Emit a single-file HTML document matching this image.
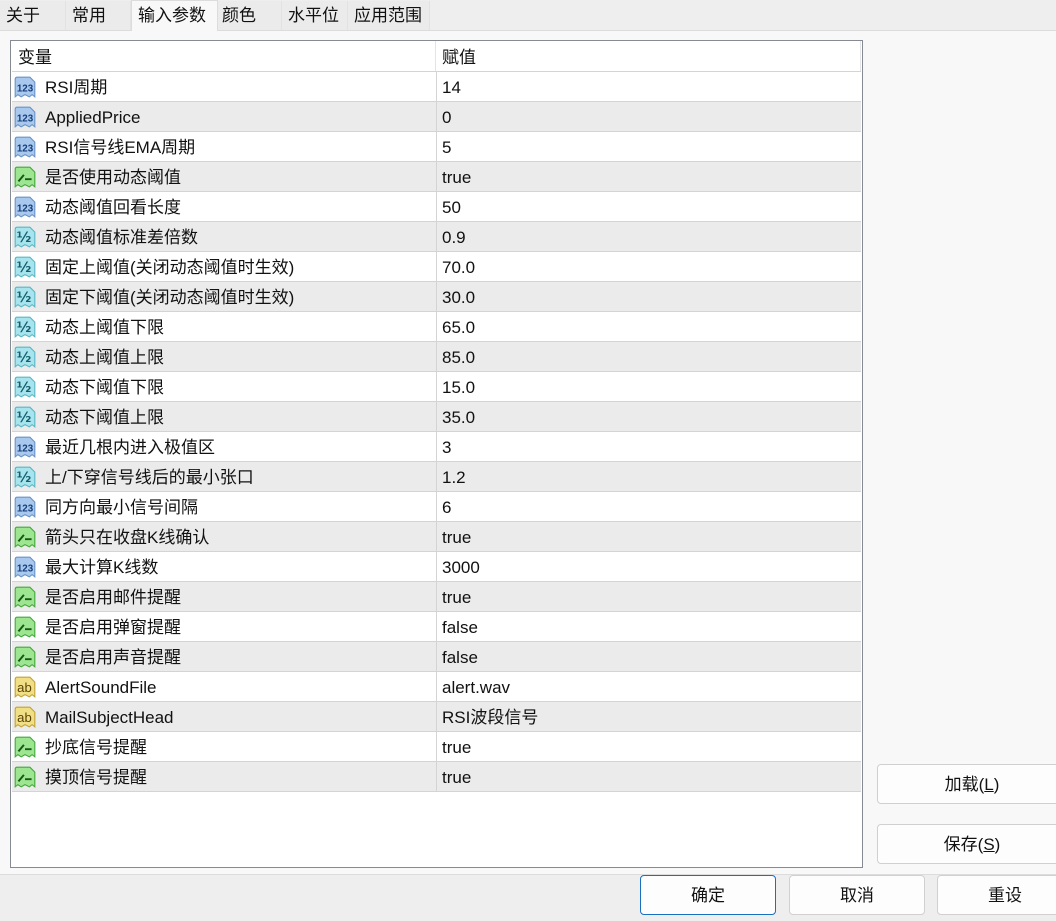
<!DOCTYPE html>
<html><head><meta charset="utf-8"><style>
*{box-sizing:border-box;margin:0;padding:0}
body{width:1056px;height:921px;overflow:hidden;background:#eeeeee;font-family:"Liberation Sans","Noto Sans CJK SC",sans-serif;font-size:17px;color:#111;position:relative}
.tabs{position:absolute;left:0;top:0;height:31px;width:1056px;border-bottom:1px solid #dcdcdc;background:#eeeeee}
.tab{position:absolute;top:1px;height:29px;line-height:30px;padding-left:6px;border-right:1px solid #e2e2e2;background:#ebebeb}
.tab.act{background:#f8f8f8;top:0;height:31px;border:1px solid #dcdcdc;border-bottom:none}
.page{position:absolute;left:0;top:31px;width:1056px;height:844px;background:#f8f8f8;border-bottom:1px solid #dcdcdc}
.list{position:absolute;left:10px;top:40px;width:853px;height:828px;border:1px solid #868a93;background:#fff;overflow:hidden}
.hdr{position:absolute;left:0;top:0;height:30px;width:851px;line-height:33px}
.row{position:absolute;left:1px;width:849px;height:30px;line-height:32px;border-top:1px solid #d4d4d4}
.row.g{background:#ebebeb}
.n{position:absolute;left:33px}
.v{position:absolute;left:430px}
.div{position:absolute;left:424px;top:0;bottom:0;border-left:1px solid #d4d4d4}
.ic{position:absolute;left:1px;top:3px}
.btn{position:absolute;height:40px;border:1px solid #d0d0d0;border-radius:4px;background:#fdfdfd;text-align:center;line-height:40px}
.btn.pri{border:1px solid #1a6fc0}
u{text-decoration:underline}
</style></head><body>
<div class="tabs">
<div class="tab" style="left:0;width:66px">关于</div>
<div class="tab" style="left:66px;width:65px;padding-left:6px">常用</div>
<div class="tab act" style="left:131px;width:87px">输入参数</div>
<div class="tab" style="left:218px;width:64px;padding-left:4px">颜色</div>
<div class="tab" style="left:282px;width:66px;padding-left:6px">水平位</div>
<div class="tab" style="left:348px;width:82px;padding-left:6px">应用范围</div>
</div>
<div class="page"></div>
<div class="list">
<div class="hdr"><span style="position:absolute;left:7px">变量</span><span style="position:absolute;left:431px">赋值</span></div>
<div style="position:absolute;left:424px;top:0;height:30px;border-left:1px solid #e4e4e4"></div>
<div style="position:absolute;left:849px;top:0;height:30px;border-left:1px solid #e4e4e4"></div>
<div id="rows"></div>
</div>
<div class="btn" style="left:877px;top:764px;width:190px">加载(<u>L</u>)</div>
<div class="btn" style="left:877px;top:824px;width:190px">保存(<u>S</u>)</div>
<div class="btn pri" style="left:640px;top:875px;width:136px">确定</div>
<div class="btn" style="left:789px;top:875px;width:136px">取消</div>
<div class="btn" style="left:937px;top:875px;width:136px">重设</div>
<script>
var data=[["i","RSI周期","14"],["i","AppliedPrice","0"],["i","RSI信号线EMA周期","5"],["b","是否使用动态阈值","true"],["i","动态阈值回看长度","50"],["d","动态阈值标准差倍数","0.9"],["d","固定上阈值(关闭动态阈值时生效)","70.0"],["d","固定下阈值(关闭动态阈值时生效)","30.0"],["d","动态上阈值下限","65.0"],["d","动态上阈值上限","85.0"],["d","动态下阈值下限","15.0"],["d","动态下阈值上限","35.0"],["i","最近几根内进入极值区","3"],["d","上/下穿信号线后的最小张口","1.2"],["i","同方向最小信号间隔","6"],["b","箭头只在收盘K线确认","true"],["i","最大计算K线数","3000"],["b","是否启用邮件提醒","true"],["b","是否启用弹窗提醒","false"],["b","是否启用声音提醒","false"],["s","AlertSoundFile","alert.wav"],["s","MailSubjectHead","RSI波段信号"],["b","抄底信号提醒","true"],["b","摸顶信号提醒","true"]];
var col={i:["#a9c8ee","#6a93c8","#163f7a"],d:["#a8e4ee","#5bb6c4","#135f6e"],b:["#9ee592","#45a83c","#145a12"],s:["#f1df86","#c2a23a","#5a4408"]};
function icon(t){var c=col[t];var inner;
if(t=="i")inner='<text x="11" y="15" font-size="9.5" font-weight="bold" text-anchor="middle" fill="'+c[2]+'" font-family="Liberation Sans" textLength="15" lengthAdjust="spacingAndGlyphs">123</text>';
else if(t=="d")inner='<text x="10" y="15.5" font-size="13" font-weight="bold" text-anchor="middle" fill="'+c[2]+'" font-family="DejaVu Sans">½</text>';
else if(t=="s")inner='<text x="10.5" y="15.5" font-size="12" text-anchor="middle" fill="'+c[2]+'" font-family="Liberation Sans">ab</text>';
else inner='<path d="M5 15 L10 9 M11 13 L17 13" stroke="'+c[2]+'" stroke-width="1.8" fill="none"/>';
return '<svg class="ic" width="24" height="24" viewBox="0 0 22 22"><path d="M2 4 Q2 2 4 2 L15.5 2 L20 6.5 L20 20 L17.5 18 L15 20 L11 18 L7.5 20 L4.5 18 L2 20 Z" fill="'+c[0]+'" stroke="'+c[1]+'" stroke-width="1"/>'+inner+'</svg>';}
var h="";for(var k=0;k<data.length;k++){var d=data[k];h+='<div class="row'+(k%2?' g':'')+'" style="top:'+(30+30*k)+'px">'+icon(d[0])+'<span class="n">'+d[1]+'</span><div class="div"></div><span class="v">'+d[2]+'</span></div>';}
h+='<div style="position:absolute;left:1px;top:750px;width:849px;border-top:1px solid #d4d4d4"></div>';
document.getElementById("rows").innerHTML=h;
</script>
</body></html>
